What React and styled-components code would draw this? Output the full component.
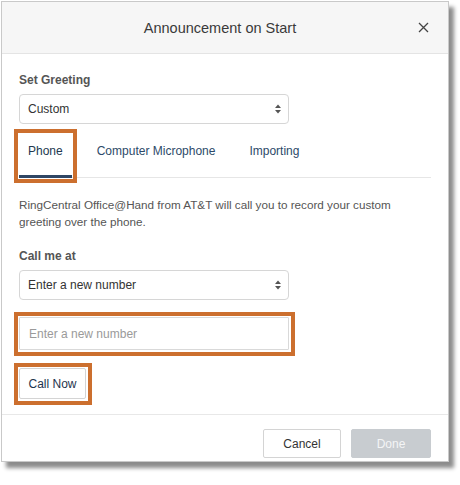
import React from "react";
import styled, { createGlobalStyle } from "styled-components";

const Global = createGlobalStyle`
  html, body { margin: 0; padding: 0; background: #ffffff; }
  body { font-family: "Liberation Sans", Arial, sans-serif; }
  * { box-sizing: border-box; }
`;

const Page = styled.div`
  padding: 1px 0 0 1px;
  width: 460px;
  height: 485px;
`;

const Dialog = styled.div`
  width: 448px;
  height: 461px;
  background: #fff;
  border: 1px solid #c9c9c9;
  box-shadow: 5px 6px 4px rgba(0, 0, 0, 0.45);
  display: flex;
  flex-direction: column;
`;

const Header = styled.div`
  height: 52px;
  flex: none;
  background: #f6f6f6;
  border-bottom: 1px solid #e4e4e4;
  display: flex;
  align-items: center;
  justify-content: center;
  position: relative;
`;

const Title = styled.div`
  font-size: 14.5px;
  color: #3a3a3a;
  margin-right: 10px;
  margin-top: 1px;
`;

const Close = styled.button`
  position: absolute;
  right: 18px;
  top: 18px;
  width: 14px;
  height: 14px;
  padding: 0;
  border: 0;
  background: none;
  display: flex;
  align-items: center;
  justify-content: center;
`;

const Body = styled.div`
  padding: 18px 17px 0 17px;
  flex: 1;
  display: flex;
  flex-direction: column;
  align-items: flex-start;
`;

const Label = styled.div`
  font-size: 12px;
  font-weight: bold;
  color: #555;
  line-height: 16px;
  margin-bottom: ${(p) => p.$gap || 6}px;
`;

const SelectBox = styled.div`
  width: 270px;
  height: 30px;
  border: 1px solid #d6d6d6;
  border-radius: 4px;
  display: flex;
  align-items: center;
  justify-content: space-between;
  padding: 0 6px 0 8px;
  font-size: 12px;
  color: #333;
  background: #fff;
`;

const Tabs = styled.div`
  margin-top: 10px;
  width: 412px;
  display: flex;
  border-bottom: 1px solid #e6e6e6;
`;

const Mark = styled.div`
  display: flex;
  border: 4px solid #cc6f2e;
  padding: ${(p) => p.$pad ?? 1}px;
  margin: ${(p) => -(4 + (p.$pad ?? 1))}px;
  margin-right: ${(p) => (p.$mr ?? 0) - (4 + (p.$pad ?? 1))}px;
`;

const Tab = styled.div`
  font-size: 12px;
  color: ${(p) => (p.$active ? "#23384f" : "#2d4a69")};
  padding: 9px 9px 0;
  height: 44px;
  margin-right: ${(p) => p.$mr || 0}px;
  border-bottom: 3px solid ${(p) => (p.$active ? "#2e4664" : "transparent")};
  line-height: 16px;
`;

const TabSlot = styled.div`
  display: flex;
  margin-bottom: -1px;
`;

const Text = styled.p`
  margin: 18px 0 18px;
  font-size: 11.7px;
  line-height: 17px;
  color: #555;
  width: 400px;
`;

const InputRow = styled.div`
  margin-top: 17px;
  display: flex;
`;

const Input = styled.input`
  width: 270px;
  height: 33px;
  border: 1px solid #d9d9d9;
  border-radius: 1px;
  padding: 0 9px;
  font-size: 12px;
  font-family: inherit;
  outline: none;
  &::placeholder { color: #9a9a9a; }
`;

const Button = styled.button`
  font-family: inherit;
  font-size: 12px;
  height: ${(p) => p.$h || 31}px;
  width: ${(p) => p.$w}px;
  border-radius: 2px;
  border: 1px solid ${(p) => (p.$disabled ? "#c8ccd0" : "#d4d4d4")};
  background: ${(p) => (p.$disabled ? "#c8ccd0" : "#fff")};
  color: ${(p) => (p.$disabled ? "#f4f5f6" : p.$navy ? "#1e344d" : "#333")};
  padding: 0;
`;

const CallRow = styled.div`
  margin-top: 18px;
  display: flex;
`;

const Footer = styled.div`
  flex: none;
  border-top: 1px solid #e8e8e8;
  height: 47px;
  display: flex;
  justify-content: flex-end;
  align-items: flex-start;
  gap: 10px;
  padding: 14px 17px 0 0;
`;

const Arrows = () => (
  <svg width="8" height="12" viewBox="0 0 8 12">
    <path d="M4 1.5 L7 5 L1 5 Z" fill="#555" />
    <path d="M4 10.5 L7 7 L1 7 Z" fill="#555" />
  </svg>
);

export default function App() {
  return (
    <Page>
      <Global />
      <Dialog>
        <Header>
          <Title>Announcement on Start</Title>
          <Close aria-label="close">
            <svg width="11" height="11" viewBox="0 0 11 11">
              <path d="M1 1 L10 10 M10 1 L1 10" stroke="#444" strokeWidth="1.3" />
            </svg>
          </Close>
        </Header>
        <Body>
          <Label>Set Greeting</Label>
          <SelectBox>
            <span>Custom</span>
            <Arrows />
          </SelectBox>
          <Tabs>
            <TabSlot>
              <Mark $mr={16}>
                <Tab $active>Phone</Tab>
              </Mark>
            </TabSlot>
            <TabSlot>
              <Tab $mr={16}>Computer Microphone</Tab>
            </TabSlot>
            <TabSlot>
              <Tab>Importing</Tab>
            </TabSlot>
          </Tabs>
          <Text>
            RingCentral Office@Hand from AT&amp;T will call you to record your custom greeting over the phone.
          </Text>
          <Label $gap={6}>Call me at</Label>
          <SelectBox>
            <span>Enter a new number</span>
            <Arrows />
          </SelectBox>
          <InputRow>
            <Mark $pad={1.5}>
              <Input placeholder="Enter a new number" />
            </Mark>
          </InputRow>
          <CallRow>
            <Mark $pad={1.5}>
              <Button $w={67} $navy>Call Now</Button>
            </Mark>
          </CallRow>
        </Body>
        <Footer>
          <Button $w={78} $h={29}>Cancel</Button>
          <Button $w={80} $h={29} $disabled>Done</Button>
        </Footer>
      </Dialog>
    </Page>
  );
}
